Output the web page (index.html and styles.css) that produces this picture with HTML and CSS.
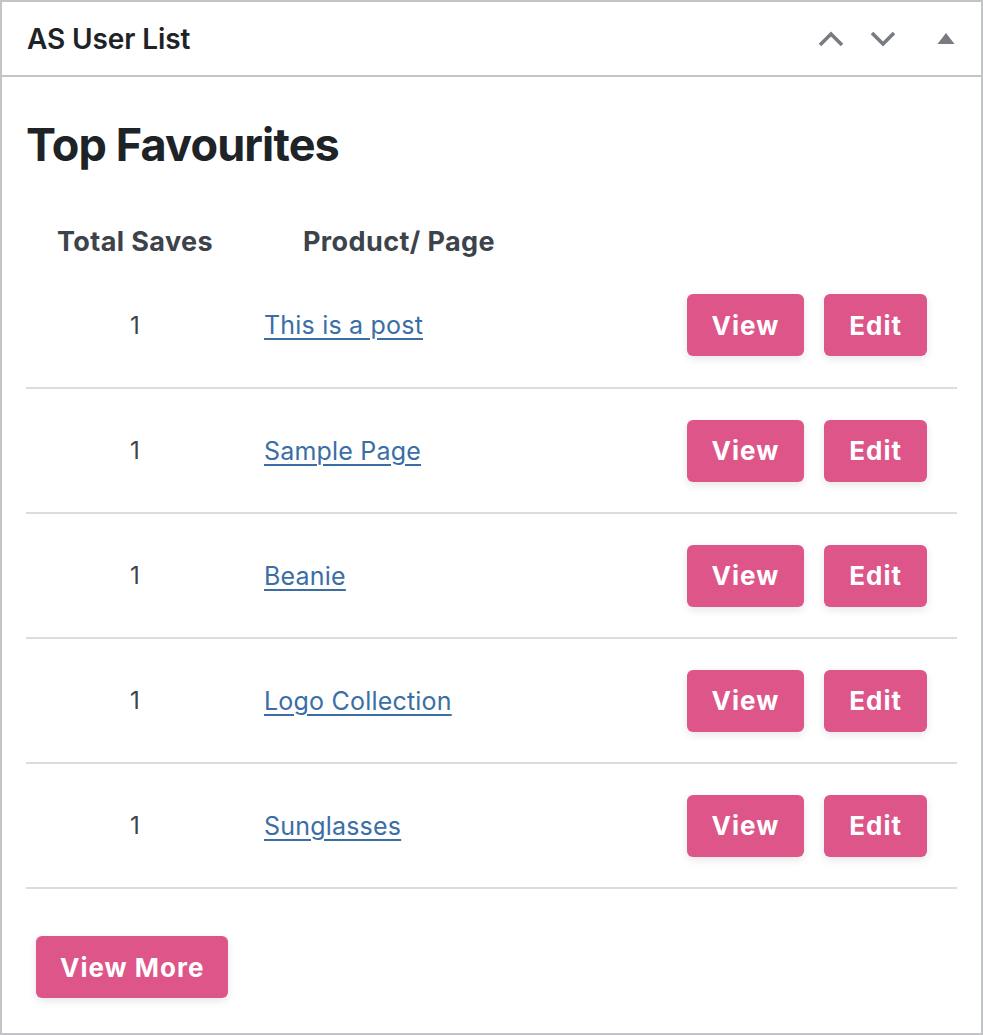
FILE: index.html
```html
<!DOCTYPE html>
<html>
<head>
<meta charset="utf-8">
<link rel="stylesheet" href="styles.css">
</head>
<body>
<div class="postbox">
  <div class="postbox-header">
    <h2 class="hndle">AS User List</h2>
    <div class="handle-actions">
      <svg class="ic ic-chev" width="28" height="16" viewBox="0 0 28 16"><path d="M3 14 L14 3 L25 14" fill="none" stroke="#787c82" stroke-width="3.6"/></svg>
      <svg class="ic ic-chev" width="28" height="16" viewBox="0 0 28 16"><path d="M3 2 L14 13 L25 2" fill="none" stroke="#787c82" stroke-width="3.6"/></svg>
      <svg class="ic ic-tri" width="18" height="12" viewBox="0 0 18 12"><path d="M9 0 L17.5 11 L0.5 11 Z" fill="#787c82"/></svg>
    </div>
  </div>
  <div class="inside">
    <h3 class="title">Top Favourites</h3>
    <table class="fav-table">
      <colgroup><col class="c1"><col class="c2"><col class="c3"></colgroup>
      <thead>
        <tr><th>Total Saves</th><th>Product/ Page</th><th></th></tr>
      </thead>
      <tbody>
        <tr><td class="num">1</td><td><a href="#">This is a post</a></td><td class="acts"><a class="btn" href="#">View</a><a class="btn" href="#">Edit</a></td></tr>
        <tr><td class="num">1</td><td><a href="#">Sample Page</a></td><td class="acts"><a class="btn" href="#">View</a><a class="btn" href="#">Edit</a></td></tr>
        <tr><td class="num">1</td><td><a href="#">Beanie</a></td><td class="acts"><a class="btn" href="#">View</a><a class="btn" href="#">Edit</a></td></tr>
        <tr><td class="num">1</td><td><a href="#">Logo Collection</a></td><td class="acts"><a class="btn" href="#">View</a><a class="btn" href="#">Edit</a></td></tr>
        <tr><td class="num">1</td><td><a href="#">Sunglasses</a></td><td class="acts"><a class="btn" href="#">View</a><a class="btn" href="#">Edit</a></td></tr>
      </tbody>
    </table>
    <div class="more"><a class="btn btn-more" href="#">View More</a></div>
  </div>
</div>
</body>
</html>
```
FILE: styles.css
```css
* { box-sizing: border-box; }
html, body { margin: 0; padding: 0; background: #fff; }
body { font-family: Inter, "Noto Sans", sans-serif; color: #3c434a; }

.postbox {
  width: 983px;
  height: 1035px;
  border: 2px solid #c3c4c7;
  background: #fff;
  display: flex;
  flex-direction: column;
}
.postbox-header {
  height: 73px;
  border-bottom: 2px solid #c3c4c7;
  display: flex;
  align-items: center;
  justify-content: space-between;
  padding: 0 26px 0 25px;
  box-sizing: content-box;
}
.hndle {
  margin: 0;
  font-size: 28px;
  font-weight: 600;
  color: #1d2327;
  letter-spacing: -0.1px;
}
.handle-actions { display: flex; align-items: center; gap: 24px; }
.ic-tri { margin-left: 16px; }

.inside { padding: 41px 24px 0 24px; flex: 1; }
.title {
  margin: 0 0 55px 0;
  font-size: 45px;
  font-weight: 700;
  color: #1d2327;
  line-height: 1.2;
  letter-spacing: -0.85px;
}

.fav-table { width: 931px; border-collapse: collapse; table-layout: fixed; }
.c1 { width: 218px; }
.c2 { width: 310px; }
.fav-table th {
  font-size: 27px;
  font-weight: 700;
  color: #3c434a;
  text-align: center;
  padding: 0 0 6px 0;
  line-height: 30px;
  letter-spacing: 0.4px;
}
.fav-table td {
  height: 125px;
  border-bottom: 2px solid #dcdcde;
  font-size: 25px;
  vertical-align: middle;
  padding: 0 0 0 20px;
}
.fav-table td.num { text-align: center; padding: 0; font-size: 24px; }
.fav-table td a:not(.btn) { color: #3a6ea5; text-decoration: underline; text-underline-offset: 4px; text-decoration-thickness: 2px; letter-spacing: 0.2px; }
.fav-table td.acts { text-align: right; padding-right: 30px; }
.acts .btn + .btn { margin-left: 20px; }

.btn {
  display: inline-flex;
  align-items: center;
  justify-content: center;
  height: 62px;
  padding: 0 25px;
  background: #dd5589;
  color: #fff;
  font-size: 26px;
  font-weight: 700;
  letter-spacing: 1px;
  text-decoration: none;
  border-radius: 6px;
  box-shadow: 0 3px 8px rgba(0,0,0,0.10);
  vertical-align: middle;
}
.more { padding: 47px 0 0 10px; }
.btn-more { padding: 0 24px; }
```
